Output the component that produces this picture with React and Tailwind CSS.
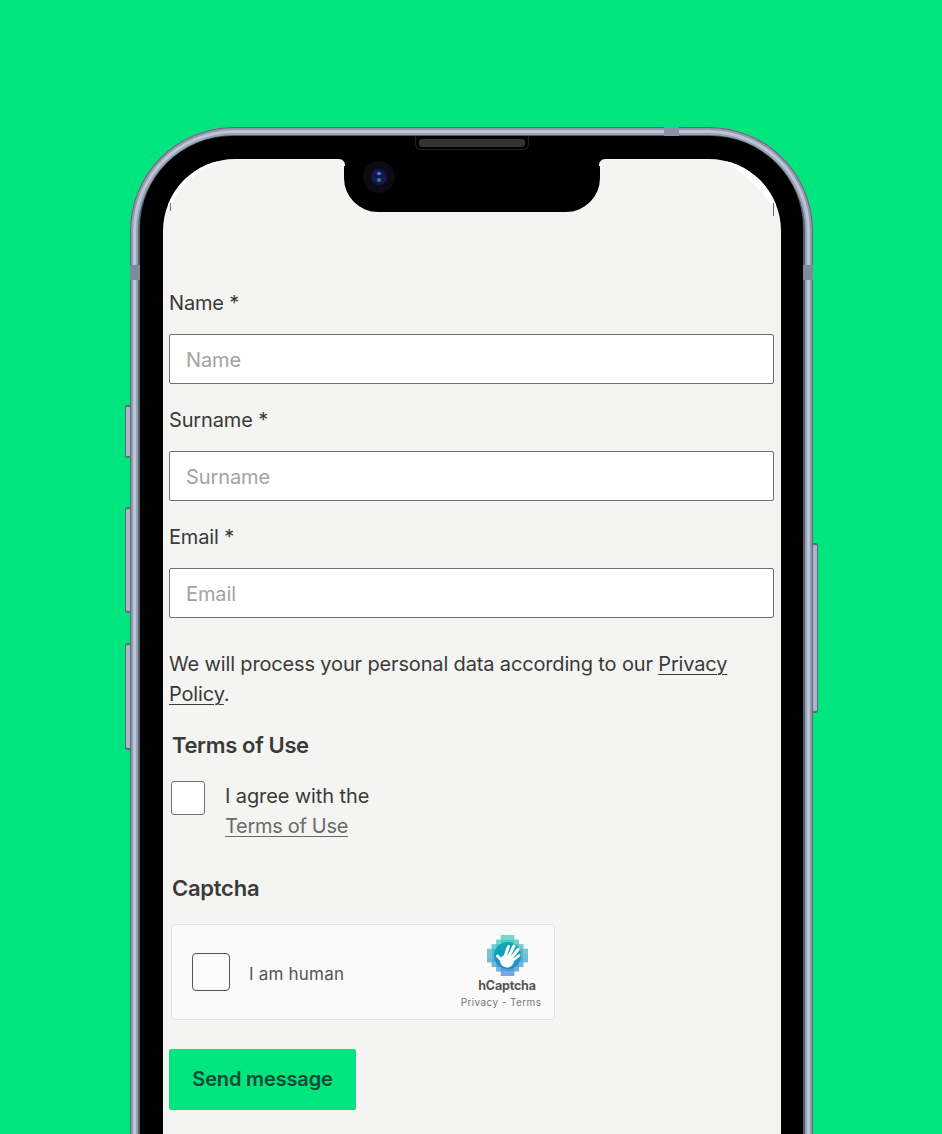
const font = { fontFamily: 'Inter, "Liberation Sans", sans-serif' };

const fields = ['Name', 'Surname', 'Email'];

function HCaptchaLogo() {
  // pixel octagon, row spans on a 9x9 grid
  const spans = [[3, 5], [2, 6], [1, 7], [0, 8], [0, 8], [0, 8], [1, 7], [2, 6], [3, 5]];
  const size = 41 / 9;
  const cells = [];
  spans.forEach(([from, to], row) => {
    for (let col = from; col <= to; col++) {
      const dist = Math.max(Math.abs(col - 4), Math.abs(row - 4)) + Math.min(Math.abs(col - 4), Math.abs(row - 4)) * 0.5;
      const t = row / 8;
      const fill = `rgb(${Math.round(50 + t * 15)},${Math.round(205 - t * 75)},${Math.round(180 + t * 35)})`;
      const opacity = dist >= 5 ? 0.5 : dist >= 4 ? 0.7 : dist >= 3 ? 0.88 : 1;
      cells.push(<rect key={`${row}-${col}`} x={col * size} y={row * size} width={size + 0.1} height={size + 0.1} fill={fill} opacity={opacity} />);
    }
  });
  return (
    <svg width="41" height="41" viewBox="0 0 41 41">
      <defs>
        <linearGradient id="hc" x1="0" y1="0" x2="0" y2="1">
          <stop offset="0" stopColor="#0eaab2" />
          <stop offset="1" stopColor="#1a8fce" />
        </linearGradient>
      </defs>
      {cells}
      <circle cx="20.5" cy="20.5" r="13.5" fill="url(#hc)" />
      <g stroke="#fff" strokeLinecap="round" fill="none">
        <path d="M17 24 L21.5 11.5" strokeWidth="3" />
        <path d="M20 25 L27 11" strokeWidth="3" />
        <path d="M22 26 L31 14.5" strokeWidth="3" />
        <path d="M24 27 L32 20.5" strokeWidth="2.8" />
        <path d="M16 27 L10.5 21" strokeWidth="3" />
      </g>
      <ellipse cx="20" cy="26" rx="7" ry="6.5" fill="#fff" />
    </svg>
  );
}

function Field({ name }) {
  return (
    <div className="flex flex-col">
      <label className="h-[30px] pt-[1px] text-[20px] leading-[30px] tracking-[-0.15px] text-[#3a3a38]">{name} *</label>
      <input
        placeholder={name}
        className="mt-[17px] h-[50px] w-[605px] rounded-[2px] border border-[#6e6e6c] bg-white px-4 pt-[2px] text-[20px] tracking-[-0.1px] text-[#3a3a38] outline-none placeholder:text-[#a3a3a0]"
      />
    </div>
  );
}

export default function App() {
  return (
    <div style={font} className="h-[1134px] w-[942px] overflow-hidden bg-[#00e57e] pt-[127px] pl-[130px]">
      <div className="relative w-[683px]">
        {/* side buttons */}
        <div className="absolute left-[-5px] top-[278px] h-[53px] w-[6px] rounded-l-[2px] border-y-2 border-l border-[#5f6778] bg-[#aeb7c7]" />
        <div className="absolute left-[-5px] top-[380px] h-[106px] w-[6px] rounded-l-[3px] border-y-2 border-l border-[#5f6778] bg-[#aeb7c7]" />
        <div className="absolute left-[-5px] top-[516px] h-[107px] w-[6px] rounded-l-[3px] border-y-2 border-l border-[#5f6778] bg-[#aeb7c7]" />
        <div className="absolute right-[-5px] top-[416px] h-[170px] w-[6px] rounded-r-[3px] border-y-2 border-r border-[#5f6778] bg-[#aeb7c7]" />

        {/* metal frame */}
        <div className="relative rounded-t-[104px] bg-[#555c6c] px-[10px] pt-[9px] shadow-[inset_0_0_0_1px_#5f6878,inset_0_0_0_3px_#8f9aad,inset_0_0_0_6px_#bcc5d4,inset_0_0_0_8px_#98a2b5]">
          {/* antenna bands */}
          <div className="absolute left-[534px] top-0 h-[9px] w-[15px] bg-[#8793a6]" />
          <div className="absolute left-0 top-[138px] h-[15px] w-[10px] bg-[#7d899c]" />
          <div className="absolute right-0 top-[138px] h-[15px] w-[10px] bg-[#7d899c]" />

          {/* black bezel */}
          <div className="relative rounded-t-[92px] bg-black pl-[23px] pr-[22px] pt-[23px]">
            {/* speaker */}
            <div className="absolute left-[275px] top-0 flex h-[14px] w-[114px] justify-center rounded-b-[6px] border-x border-b border-[#222] pt-[3px]">
              <div className="h-[8px] w-[106px] rounded-[3px] bg-[#333] bg-[radial-gradient(#1a1a1a_35%,transparent_40%)] bg-[length:2px_2px]" />
            </div>

            {/* screen */}
            <div className="relative overflow-hidden rounded-t-[72px] bg-[#f4f4f2] px-[6px] pt-[128px] pb-[60px] text-[#3a3a38]">
              {/* white corner slivers */}
              <svg className="absolute left-0 top-0" width="618" height="60" viewBox="0 0 618 60" fill="none">
                <path d="M56 0 L0 0 L0 46 L8 46 C15 31 29 15 56 2 Z" fill="#fff" />
                <path d="M562 0 L618 0 L618 46 L608 46 C598 30 585 18 562 2 Z" fill="#fff" />
                <path d="M610.5 44 L610.5 57" stroke="#666" strokeWidth="1" />
                <path d="M7.5 44 L7.5 52" stroke="#777" strokeWidth="1" />
              </svg>

              {/* notch */}
              <div className="absolute left-[181px] top-0 h-[53px] w-[256px] rounded-b-[34px] bg-black">
                <div className="absolute left-[19px] top-[2px] flex h-[32px] w-[32px] items-center justify-center rounded-full bg-[#0c0a12]">
                  <div className="relative h-[16px] w-[16px] rounded-full bg-[#15184f]">
                    <div className="absolute left-[6px] top-[3px] h-[3px] w-[4px] rounded-full bg-[#5a6fe0]" />
                    <div className="absolute left-[6px] top-[9px] h-[4px] w-[4px] rounded-full bg-[#1f8a8a]" />
                  </div>
                </div>
              </div>
              <div className="absolute left-[175px] top-0 h-[7px] w-[7px] bg-black">
                <div className="h-[7px] w-[7px] rounded-tr-[6px] bg-[#f4f4f2]" />
              </div>
              <div className="absolute left-[436px] top-0 h-[7px] w-[7px] bg-black">
                <div className="h-[7px] w-[7px] rounded-tl-[6px] bg-[#f4f4f2]" />
              </div>

              <div className="relative flex flex-col gap-[20px]">
                {fields.map((f) => (
                  <Field key={f} name={f} />
                ))}
              </div>

              <p className="mt-[31px] w-[600px] text-[20px] leading-[30px] tracking-[-0.15px]">
                We will process your personal data according to our <span className="underline decoration-1 underline-offset-[3px]">Privacy Policy</span>.
              </p>

              <h3 className="mt-[21px] ml-[3px] text-[22px] font-semibold leading-[30px] tracking-[-0.35px]">Terms of Use</h3>

              <div className="mt-[21px] ml-[2px] flex gap-[20px]">
                <div className="h-[34px] w-[34px] rounded-[3px] border border-[#6e6e6c] bg-white" />
                <div className="text-[20px] leading-[30px]">
                  <div className="tracking-[-0.1px]">I agree with the</div>
                  <div className="tracking-[-0.3px] text-[#6a6a68] underline decoration-1 underline-offset-[3px]">Terms of Use</div>
                </div>
              </div>

              <h3 className="mt-[32px] ml-[3px] text-[22px] font-semibold leading-[30px] tracking-[-0.25px]">Captcha</h3>

              <div className="mt-[21px] ml-[2px] flex h-[96px] w-[384px] items-center rounded-[4px] border border-[#e2e2e2] bg-[#fafafa] pl-[20px] pr-[13px]">
                <div className="h-[38px] w-[38px] rounded-[4px] border border-[#555] bg-[#fbfbfb]" />
                <span className="ml-[19px] pt-[5px] text-[17px] tracking-[0.2px] text-[#555]">I am human</span>
                <div className="ml-auto flex w-[80px] flex-col items-center">
                  <div className="ml-[12px]">
                    <HCaptchaLogo />
                  </div>
                  <div className="ml-[12px] mt-[2px] text-[12.5px] font-bold leading-[16px] tracking-[-0.2px] text-[#555]">hCaptcha</div>
                  <div className="mt-[1px] whitespace-nowrap text-[10px] leading-[14px] tracking-[0.4px] text-[#777]">Privacy - Terms</div>
                </div>
              </div>

              <button className="mt-[29px] flex h-[61px] w-[187px] items-center justify-center rounded-[2px] bg-[#00e57e] pb-[1px] text-[20px] font-semibold tracking-[-0.15px] text-[#0d4a35]">
                Send message
              </button>
            </div>
          </div>
        </div>
      </div>
    </div>
  );
}
